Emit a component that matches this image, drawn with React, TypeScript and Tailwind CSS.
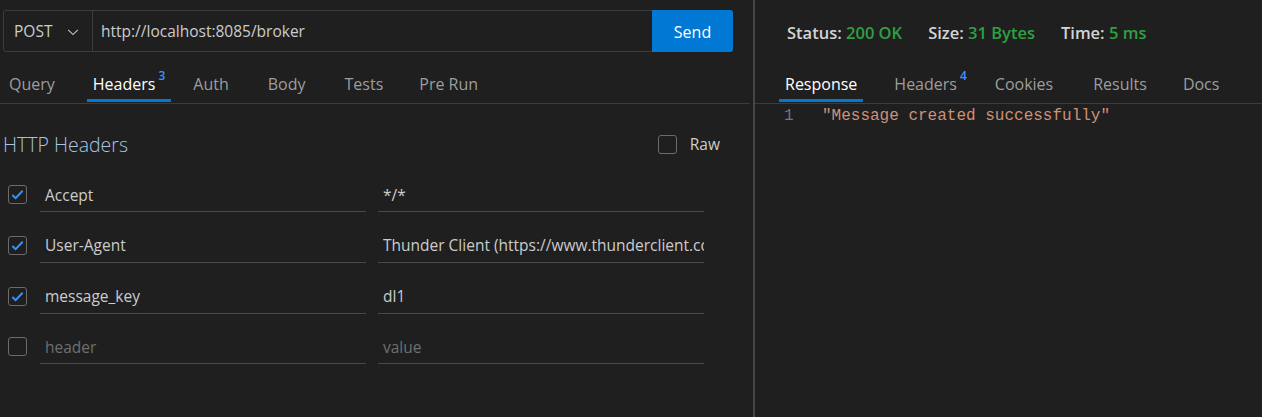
import React from 'react'

const headers = [
    { on: true, key: 'Accept', value: '*/*' },
    { on: true, key: 'User-Agent', value: 'Thunder Client (https://www.thunderclient.com)' },
    { on: true, key: 'message_key', value: 'dl1' },
    { on: false, key: '', value: '' },
]

function Check({ on }: { on: boolean }) {
    return (
        <div className="w-[19px] h-[19px] border border-[#6b6b6b] rounded-[3px] flex items-center justify-center">
            {on && (
                <svg width="15" height="15" viewBox="0 0 16 16" fill="none">
                    <path d="M2.5 8.5 L6 12 L13.5 4" stroke="#3794ff" strokeWidth="2" />
                </svg>
            )}
        </div>
    )
}

function Tab({ label, active, badge }: { label: string; active?: boolean; badge?: string }) {
    return (
        <div className="relative h-full flex items-center px-[6px]">
            <span className={active ? 'text-white' : 'text-[#9d9d9d]'}>{label}</span>
            {badge && <span className="self-start mt-[6px] text-[#3794ff] text-[12px] font-semibold ml-[3px] leading-none">{badge}</span>}
            {active && <div className="absolute left-0 right-0 bottom-[1px] h-[3px] bg-[#0078d4]" />}
        </div>
    )
}

export default function App() {
    return (
        <div className="w-[1262px] h-[417px] bg-[#1f1f1f] flex font-['Open_Sans',sans-serif] text-[#cccccc] overflow-hidden">
            {/* request side */}
            <div className="w-[753px] flex flex-col">
                <div className="mt-[10px] ml-[3px] w-[730px] h-[42px] flex border border-[#3c3c3c] rounded-[3px]">
                    <div className="w-[89px] flex items-center justify-between pl-[10px] pr-[12px] pt-[2px] border-r border-[#3c3c3c] text-[15.5px] text-[#cccccc]">
                        <span>POST</span>
                        <svg width="14" height="14" viewBox="0 0 16 16" fill="none">
                            <path d="M2.5 5.5 L8 11 L13.5 5.5" stroke="#c5c5c5" strokeWidth="1.2" />
                        </svg>
                    </div>
                    <div className="flex-1 flex items-center pl-[8px] pt-[2px] text-[15.5px] text-[#cccccc]">http://localhost:8085/broker</div>
                    <button className="w-[81px] -my-px -mr-px pt-[2px] bg-[#0078d4] text-white text-[16px] rounded-r-[3px]">Send</button>
                </div>

                <div className="mt-[12px] h-[40px] mr-[3px] flex items-center text-[16px] border-b border-[#3c3c3c] pl-[3px]">
                    <Tab label="Query" />
                    <div className="w-[26px]" />
                    <Tab label="Headers" badge="3" active />
                    <div className="w-[16px]" />
                    <Tab label="Auth" />
                    <div className="w-[27px]" />
                    <Tab label="Body" />
                    <div className="w-[27px]" />
                    <Tab label="Tests" />
                    <div className="w-[24px]" />
                    <Tab label="Pre Run" />
                </div>

                <div className="mt-[26px] flex items-center justify-between pl-[3px] pr-[33px]">
                    <div className="text-[19.5px] font-light text-[#a9c6e0]">HTTP Headers</div>
                    <div className="flex items-center gap-[13px] text-[15.5px] text-[#cccccc]">
                        <Check on={false} />
                        <span>Raw</span>
                    </div>
                </div>

                <div className="mt-[20px] flex flex-col">
                    {headers.map((h, i) => (
                        <div key={i} className="h-[50.7px] flex items-start pl-[8px]">
                            <div className="pt-[6px]">
                                <Check on={h.on} />
                            </div>
                            <div className="ml-[13px] w-[326px] h-[33px] flex items-center px-[5px] border-b border-[#4a4a4a] text-[15.5px]">
                                {h.key ? <span className="text-[#cccccc]">{h.key}</span> : <span className="text-[#6f6f6f]">header</span>}
                            </div>
                            <div className="ml-[12px] w-[326px] h-[33px] flex items-center px-[5px] border-b border-[#4a4a4a] text-[15.5px] overflow-hidden whitespace-nowrap">
                                {h.value ? <span className="text-[#cccccc]">{h.value}</span> : <span className="text-[#6f6f6f]">value</span>}
                            </div>
                        </div>
                    ))}
                </div>
            </div>

            <div className="w-[2px] bg-[#464646]" />

            {/* response side */}
            <div className="flex-1 flex flex-col">
                <div className="mt-[22px] ml-[32px] h-[22px] flex items-center gap-[26px] text-[16.5px] font-semibold">
                    <span className="text-[#d4d4d4]">Status: <span className="text-[#2ea043]">200 OK</span></span>
                    <span className="text-[#d4d4d4]">Size: <span className="text-[#2ea043]">31 Bytes</span></span>
                    <span className="text-[#d4d4d4]">Time: <span className="text-[#2ea043]">5 ms</span></span>
                </div>

                <div className="mt-[20px] h-[40px] flex items-center text-[16px] border-b border-[#3c3c3c] pl-[24px]">
                    <Tab label="Response" active />
                    <div className="w-[25px]" />
                    <Tab label="Headers" badge="4" />
                    <div className="w-[16px]" />
                    <Tab label="Cookies" />
                    <div className="w-[28px]" />
                    <Tab label="Results" />
                    <div className="w-[24px]" />
                    <Tab label="Docs" />
                </div>

                <div className="flex items-center font-['Liberation_Mono',monospace] text-[16px]">
                    <span className="w-[67px] pl-[29px] text-[#6e7681]">1</span>
                    <span className="text-[#ce9178]">"Message created successfully"</span>
                </div>
            </div>
        </div>
    )
}
